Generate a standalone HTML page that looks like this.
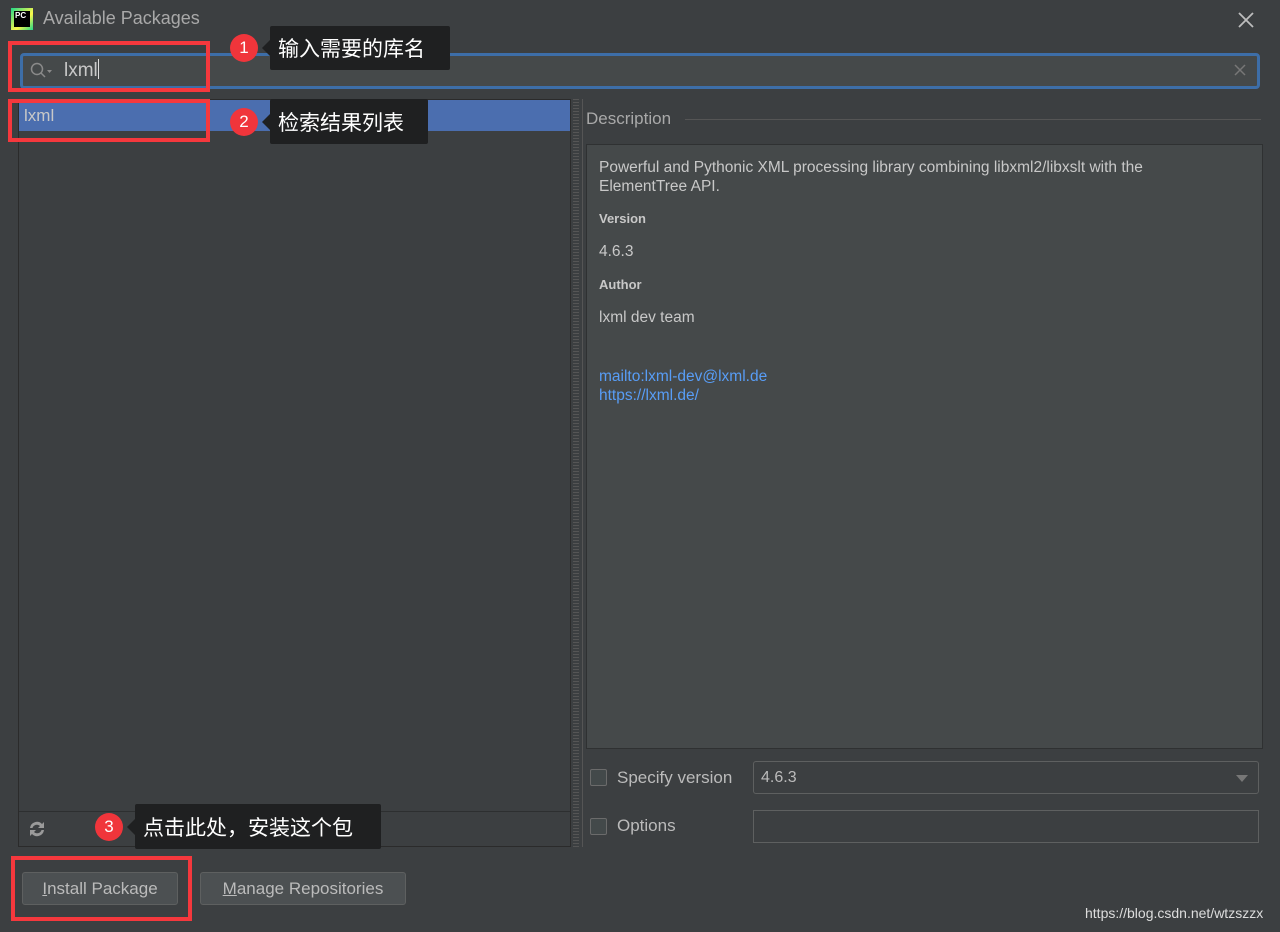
<!DOCTYPE html>
<html><head><meta charset="utf-8">
<style>
*{box-sizing:border-box;margin:0;padding:0}
body{width:1280px;height:932px;background:#3c3f41;font-family:"Liberation Sans","Noto Sans CJK SC",sans-serif;color:#bbbbbb;position:relative;overflow:hidden}
.abs{position:absolute}
.red{position:absolute;border:4px solid #f5383d}
.tip{position:absolute;background:#1f2021;color:#fff;font-size:21px;padding:0 8px;display:flex;align-items:center;border-radius:2px}
.tip:before{content:"";position:absolute;left:-8px;top:50%;margin-top:-8px;border:8px solid transparent;border-left:0;border-right-color:#1f2021}
.num{position:absolute;width:28px;height:28px;border-radius:50%;background:#f0353b;color:#fff;font-size:17px;text-align:center;line-height:28px}
.btn{position:absolute;height:33px;border:1px solid #5e6060;border-radius:3px;background:#4c5052;color:#bbb;font-size:17px;text-align:center;line-height:31px}
.cb{position:absolute;width:17px;height:17px;border:1px solid #6b6b6b;border-radius:2px;background:#43494a}
.d{font-size:15.5px;color:#c8c8c8;position:absolute;left:599px}
</style></head><body>
<div class="abs" style="left:11px;top:8px;width:22px;height:22px;background:linear-gradient(135deg,#21d789,#fcf84a 60%,#21d789)"></div>
<div class="abs" style="left:14px;top:11px;width:16px;height:16px;background:#000;color:#fff;font-size:8px;font-weight:bold;padding-left:1px">PC</div>
<div class="abs" style="left:43px;top:8px;font-size:18px;color:#a9a9a9">Available Packages</div>
<svg class="abs" style="left:1238px;top:12px" width="16" height="16"><path d="M1 1L15 15M15 1L1 15" stroke="#bdbdbd" stroke-width="1.8"/></svg>
<div class="abs" style="left:20px;top:53px;width:1240px;height:36px;border:3px solid #3d6ea8;border-radius:4px;background:#45494a"></div>
<svg class="abs" style="left:30px;top:62px" width="24" height="18"><circle cx="7" cy="7" r="5.5" fill="none" stroke="#8a8a8a" stroke-width="1.5"/><line x1="11" y1="11" x2="15" y2="15" stroke="#8a8a8a" stroke-width="1.5"/><path d="M17 8h5l-2.5 3z" fill="#8a8a8a"/></svg>
<div class="abs" style="left:64px;top:59px;font-size:19px;color:#c8c8c8">lxml<span style="display:inline-block;width:1px;height:20px;background:#ddd;vertical-align:-3px"></span></div>
<svg class="abs" style="left:1234px;top:64px" width="12" height="12"><path d="M1 1L11 11M11 1L1 11" stroke="#777" stroke-width="1.5"/></svg>
<div class="abs" style="left:18px;top:99px;width:553px;height:748px;border:1px solid #2b2b2b;background:#3c3f41"></div>
<div class="abs" style="left:19px;top:100px;width:551px;height:31px;background:#4b6eaf"></div>
<div class="abs" style="left:24px;top:106px;font-size:17px;color:#c8c8c8">lxml</div>
<div class="abs" style="left:19px;top:811px;width:551px;height:1px;background:#2d2f30"></div>
<svg class="abs" style="left:26px;top:818px" width="22" height="22" viewBox="0 0 22 22"><path d="M4 10a7 7 0 0 1 12-4l2-2v6h-6l2-2a4.5 4.5 0 0 0-7.5 2z M18 12a7 7 0 0 1-12 4l-2 2v-6h6l-2 2a4.5 4.5 0 0 0 7.5-2z" fill="#9a9a9a"/></svg>
<div class="abs" style="left:573px;top:99px;width:6px;height:748px;background:repeating-linear-gradient(#555 0 1px,#3c3f41 1px 3px)"></div>
<div class="abs" style="left:582px;top:99px;width:1px;height:748px;background:#555"></div>
<div class="abs" style="left:586px;top:109px;font-size:17px;color:#a9a9a9">Description</div>
<div class="abs" style="left:685px;top:119px;width:576px;height:1px;background:#555"></div>
<div class="abs" style="left:586px;top:144px;width:677px;height:605px;border:1px solid #2f3132;background:#45494a"></div>
<div class="d" style="top:158px;line-height:19px">Powerful and Pythonic XML processing library combining libxml2/libxslt with the<br>ElementTree API.</div>
<div class="d" style="top:211px;font-size:13px;font-weight:bold">Version</div>
<div class="d" style="top:243px">4.6.3</div>
<div class="d" style="top:277px;font-size:13px;font-weight:bold">Author</div>
<div class="d" style="top:309px">lxml dev team</div>
<div class="d" style="top:367px;color:#589df6;line-height:19px">mailto:lxml-dev@lxml.de<br>https://lxml.de/</div>
<div class="cb" style="left:590px;top:769px"></div>
<div class="abs" style="left:617px;top:768px;font-size:17px;color:#bbb">Specify version</div>
<div class="abs" style="left:753px;top:761px;width:506px;height:33px;border:1px solid #5e6060;border-radius:3px;background:#3c3f41"></div>
<div class="abs" style="left:761px;top:769px;font-size:16px;color:#bbb">4.6.3</div>
<div class="abs" style="left:1236px;top:775px;border:6px solid transparent;border-top:7px solid #777"></div>
<div class="cb" style="left:590px;top:818px"></div>
<div class="abs" style="left:617px;top:816px;font-size:17px;color:#bbb">Options</div>
<div class="abs" style="left:753px;top:810px;width:506px;height:33px;border:1px solid #5e6060;background:#3c3f41"></div>
<div class="btn" style="left:22px;top:872px;width:156px"><u>I</u>nstall Package</div>
<div class="btn" style="left:200px;top:872px;width:206px"><u>M</u>anage Repositories</div>
<div class="abs" style="left:1085px;top:905px;font-size:14px;color:#ddd">https://blog.csdn.net/wtzszzx</div>
<div class="red" style="left:8px;top:41px;width:202px;height:51px"></div>
<div class="red" style="left:8px;top:99px;width:202px;height:43px"></div>
<div class="red" style="left:11px;top:856px;width:181px;height:65px"></div>
<div class="num" style="left:230px;top:34px">1</div>
<div class="tip" style="left:270px;top:26px;height:44px;width:180px">输入需要的库名</div>
<div class="num" style="left:230px;top:108px">2</div>
<div class="tip" style="left:270px;top:99px;height:45px;width:158px">检索结果列表</div>
<div class="num" style="left:95px;top:813px">3</div>
<div class="tip" style="left:135px;top:804px;height:45px;width:246px">点击此处，安装这个包</div>
</body></html>
